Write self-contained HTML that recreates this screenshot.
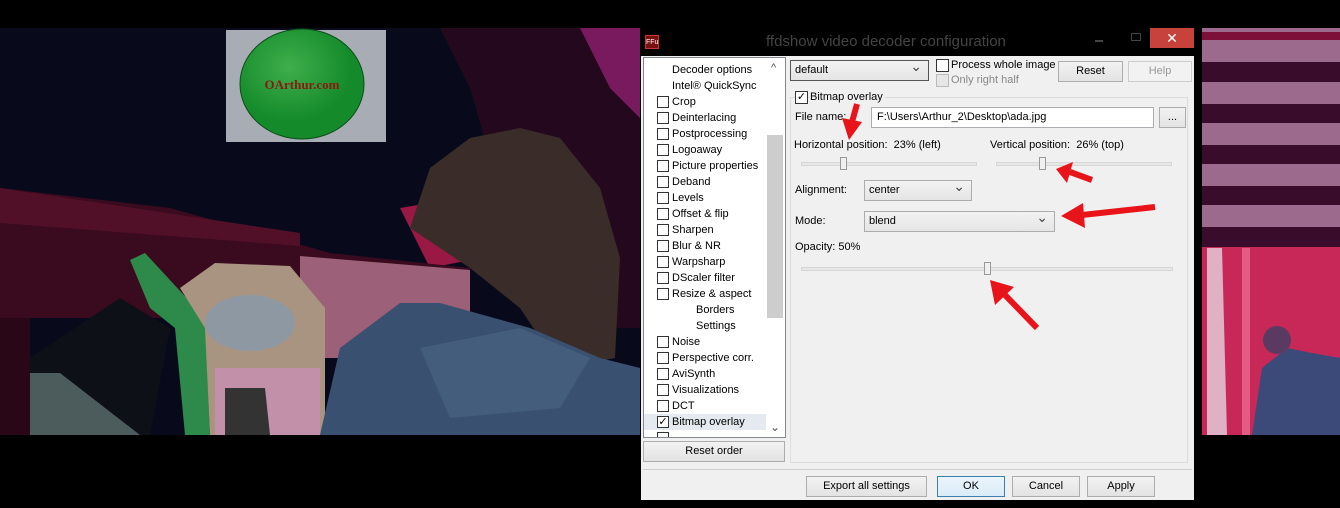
<!DOCTYPE html>
<html><head><meta charset="utf-8"><style>
*{margin:0;padding:0;box-sizing:border-box}
body{width:1340px;height:508px;background:#000;position:relative;overflow:hidden;font-family:"Liberation Sans",sans-serif;font-size:11px;color:#000}
.a{position:absolute}
.it{position:absolute;left:672px;height:16px;line-height:16px;white-space:nowrap}
.cb{position:absolute;left:657px;width:12px;height:12px;border:1px solid #333;background:#fff}
.btn{position:absolute;background:linear-gradient(#f2f2f2,#e3e3e3);border:1px solid #adadad;text-align:center;line-height:19px;height:21px}
.dd{position:absolute;border:1px solid #acacac;background:linear-gradient(#f2f2f2,#e5e5e5);height:21px;line-height:19px;padding-left:4px}
.dd::after{content:"⌄";position:absolute;right:6px;top:-4px;font-size:14px;color:#444}
.tr{position:absolute;height:4px;background:#e7e7e7;border:1px solid #d6d6d6}
.th{position:absolute;width:7px;height:13px;background:#f0f0f0;border:1px solid #999}
</style></head><body>
<!-- left video -->
<svg class="a" style="left:0;top:28px" width="640" height="407">
<defs><radialGradient id="gr" cx="0.4" cy="0.35"><stop offset="0" stop-color="#3fae4c"/><stop offset="1" stop-color="#148a2a"/></radialGradient></defs>
<rect width="640" height="407" fill="#080a1c"/>
<polygon points="440,0 640,0 640,300 540,300 470,60" fill="#24091e"/>
<polygon points="580,0 640,0 640,90 610,60" fill="#7a1a5e"/>
<polygon points="400,180 460,170 480,230 430,240" fill="#9a1844"/>
<polygon points="0,160 170,180 330,225 470,240 470,290 0,290" fill="#3a0a1e"/>
<polygon points="0,160 300,205 300,218 0,195" fill="#521028"/>
<polygon points="0,290 30,290 30,407 0,407" fill="#2a0716"/>
<polygon points="300,228 470,242 470,330 300,330" fill="#9c6078"/>
<polygon points="30,330 120,270 170,300 150,407 30,407" fill="#0e1018"/>
<polygon points="30,345 60,345 140,407 30,407" fill="#4c5c5c"/>
<polygon points="130,232 145,225 205,290 210,407 185,407 175,300 150,280" fill="#2e8a4a"/>
<polygon points="180,260 215,235 290,238 325,280 325,407 210,407 205,300" fill="#a89480"/>
<ellipse cx="250" cy="295" rx="45" ry="28" fill="#8e98a2"/>
<polygon points="215,340 320,340 320,407 215,407" fill="#c290a8"/>
<polygon points="225,360 265,360 270,407 225,407" fill="#333"/>
<polygon points="410,200 430,140 470,110 520,100 560,110 600,160 620,230 615,330 560,340 520,280 470,240" fill="#3a2c28"/>
<polygon points="320,407 340,320 400,275 440,275 530,300 600,330 640,340 640,407" fill="#3a5070"/>
<polygon points="420,320 520,300 590,330 560,380 450,390" fill="#4a6282" opacity=".7"/>
<rect x="226" y="2" width="160" height="112" fill="#a8adb5"/>
<ellipse cx="302" cy="56" rx="62" ry="55" fill="url(#gr)" stroke="#0b4e18"/>
<text x="302" y="61" text-anchor="middle" font-family="Liberation Serif" font-weight="bold" font-size="13" fill="#8a1a10">OArthur.com</text>
</svg>
<!-- right video -->
<svg class="a" style="left:1202px;top:28px" width="138" height="407">
<rect width="138" height="407" fill="#7c1038"/>
<g fill="#9c6a8c"><rect y="0" width="138" height="4"/><rect y="12" width="138" height="22"/><rect y="54" width="138" height="22"/><rect y="95" width="138" height="22"/><rect y="136" width="138" height="22"/><rect y="177" width="138" height="22"/></g>
<g fill="#3a0c2c"><rect y="34" width="138" height="20"/><rect y="76" width="138" height="19"/><rect y="117" width="138" height="19"/><rect y="158" width="138" height="19"/><rect y="199" width="138" height="20"/></g>
<rect y="219" width="138" height="188" fill="#c82858"/>
<polygon points="5,220 20,220 25,407 5,407" fill="#e0b0c4"/>
<rect x="40" y="220" width="8" height="187" fill="#e65a86"/>
<polygon points="50,407 60,340 85,320 110,325 138,330 138,407" fill="#3c4a7a"/>
<circle cx="75" cy="312" r="14" fill="#5a3a60"/>
</svg>
<!-- dialog -->
<div class="a" style="left:641px;top:28px;width:553px;height:472px;background:#f0f0f0"></div>
<div class="a" style="left:641px;top:28px;width:553px;height:28px;background:#000"></div>
<div class="a" style="left:645px;top:35px;width:14px;height:14px;background:#7a1010;color:#fff;font-size:7px;line-height:14px;text-align:center;border:1px solid #c33">FFu</div>
<div class="a" style="left:766px;top:33px;font-size:15px;color:#444">ffdshow video decoder configuration</div>
<div class="a" style="left:1095px;top:40px;width:8px;height:2px;background:#444"></div>
<div class="a" style="left:1131px;top:33px;width:10px;height:8px;border:1px solid #444"></div>
<div class="a" style="left:1150px;top:28px;width:44px;height:20px;background:#c7423a;color:#fff;text-align:center;font-size:14px;line-height:20px">✕</div>
<!-- tree -->
<div class="a" style="left:643px;top:57px;width:143px;height:381px;background:#fff;border:1px solid #828790"></div>
<div class="a" style="left:644px;top:414px;width:122px;height:16px;background:#e5eaf0"></div>
<div class="a" style="left:767px;top:135px;width:16px;height:183px;background:#cdcdcd"></div>
<div class="a" style="left:771px;top:62px;color:#555;font-size:11px">^</div>
<div class="a" style="left:770px;top:420px;color:#555;font-size:12px">⌄</div>
<div class="it" style="top:62px">Decoder options</div>
<div class="it" style="top:78px">Intel® QuickSync</div>
<div class="cb" style="top:96px"></div><div class="it" style="top:94px">Crop</div>
<div class="cb" style="top:112px"></div><div class="it" style="top:110px">Deinterlacing</div>
<div class="cb" style="top:128px"></div><div class="it" style="top:126px">Postprocessing</div>
<div class="cb" style="top:144px"></div><div class="it" style="top:142px">Logoaway</div>
<div class="cb" style="top:160px"></div><div class="it" style="top:158px">Picture properties</div>
<div class="cb" style="top:176px"></div><div class="it" style="top:174px">Deband</div>
<div class="cb" style="top:192px"></div><div class="it" style="top:190px">Levels</div>
<div class="cb" style="top:208px"></div><div class="it" style="top:206px">Offset &amp; flip</div>
<div class="cb" style="top:224px"></div><div class="it" style="top:222px">Sharpen</div>
<div class="cb" style="top:240px"></div><div class="it" style="top:238px">Blur &amp; NR</div>
<div class="cb" style="top:256px"></div><div class="it" style="top:254px">Warpsharp</div>
<div class="cb" style="top:272px"></div><div class="it" style="top:270px">DScaler filter</div>
<div class="cb" style="top:288px"></div><div class="it" style="top:286px">Resize &amp; aspect</div>
<div class="it" style="top:302px;left:696px">Borders</div>
<div class="it" style="top:318px;left:696px">Settings</div>
<div class="cb" style="top:336px"></div><div class="it" style="top:334px">Noise</div>
<div class="cb" style="top:352px"></div><div class="it" style="top:350px">Perspective corr.</div>
<div class="cb" style="top:368px"></div><div class="it" style="top:366px">AviSynth</div>
<div class="cb" style="top:384px"></div><div class="it" style="top:382px">Visualizations</div>
<div class="cb" style="top:400px"></div><div class="it" style="top:398px">DCT</div>
<div class="cb" style="top:416px;font-size:11px;line-height:10px;text-align:center">✓</div><div class="it" style="top:414px">Bitmap overlay</div>
<div class="a" style="left:657px;top:432px;width:12px;height:5px;border:1px solid #333;border-bottom:none"></div>
<div class="btn" style="left:643px;top:441px;width:142px">Reset order</div>
<!-- top controls -->
<div class="dd" style="left:790px;top:60px;width:139px;border-color:#555">default</div>
<div class="a" style="left:936px;top:59px;width:13px;height:13px;border:1px solid #333;background:#fff"></div>
<div class="a" style="left:951px;top:59px">Process whole image</div>
<div class="a" style="left:936px;top:74px;width:13px;height:13px;border:1px solid #bbb;background:#e6e6e6"></div>
<div class="a" style="left:951px;top:74px;color:#888">Only right half</div>
<div class="btn" style="left:1058px;top:61px;width:65px">Reset</div>
<div class="btn" style="left:1128px;top:61px;width:64px;color:#999;border-color:#ccc;background:#f2f2f2">Help</div>
<!-- group -->
<div class="a" style="left:790px;top:97px;width:398px;height:366px;border:1px solid #dcdcdc"></div>
<div class="a" style="left:795px;top:91px;width:13px;height:13px;border:1px solid #333;background:#fff;font-size:11px;line-height:11px;text-align:center">✓</div>
<div class="a" style="left:810px;top:91px;background:#f0f0f0;padding-right:2px">Bitmap overlay</div>
<div class="a" style="left:795px;top:111px">File name:</div>
<div class="a" style="left:871px;top:107px;width:283px;height:21px;background:#fff;border:1px solid #abadb3;padding-left:5px;line-height:19px">F:\Users\Arthur_2\Desktop\ada.jpg</div>
<div class="btn" style="left:1159px;top:107px;width:27px">...</div>
<div class="a" style="left:794px;top:139px">Horizontal position:&nbsp; 23% (left)</div>
<div class="a" style="left:990px;top:139px">Vertical position:&nbsp; 26% (top)</div>
<div class="tr" style="left:801px;top:162px;width:176px"></div><div class="th" style="left:840px;top:157px"></div>
<div class="tr" style="left:996px;top:162px;width:176px"></div><div class="th" style="left:1039px;top:157px"></div>
<div class="a" style="left:795px;top:184px">Alignment:</div>
<div class="dd" style="left:864px;top:180px;width:108px">center</div>
<div class="a" style="left:795px;top:215px">Mode:</div>
<div class="dd" style="left:864px;top:211px;width:191px">blend</div>
<div class="a" style="left:795px;top:241px">Opacity: 50%</div>
<div class="tr" style="left:801px;top:267px;width:372px"></div><div class="th" style="left:984px;top:262px"></div>
<!-- bottom -->
<div class="a" style="left:643px;top:469px;width:549px;height:1px;background:#cfcfcf"></div>
<div class="btn" style="left:806px;top:476px;width:121px">Export all settings</div>
<div class="btn" style="left:937px;top:476px;width:68px;border-color:#3c7fb1;background:linear-gradient(#eaf4fb,#dbecf8)">OK</div>
<div class="btn" style="left:1012px;top:476px;width:68px">Cancel</div>
<div class="btn" style="left:1087px;top:476px;width:68px">Apply</div>
<!-- arrows -->
<svg class="a" style="left:0;top:0" width="1340" height="508">
<g stroke="#e8141a" stroke-width="6" fill="#e8141a">
<line x1="857" y1="104" x2="852" y2="122"/><polygon points="842,118 862,122 849,140" stroke="none"/>
<line x1="1092" y1="180" x2="1070" y2="172"/><polygon points="1073,162 1056,169 1067,183" stroke="none"/>
<line x1="1155" y1="207" x2="1082" y2="215"/><polygon points="1083,203 1061,216 1085,228" stroke="none"/>
<line x1="1037" y1="328" x2="1005" y2="295"/><polygon points="995,305 990,280 1014,287" stroke="none"/>
</g></svg>
</body></html>
